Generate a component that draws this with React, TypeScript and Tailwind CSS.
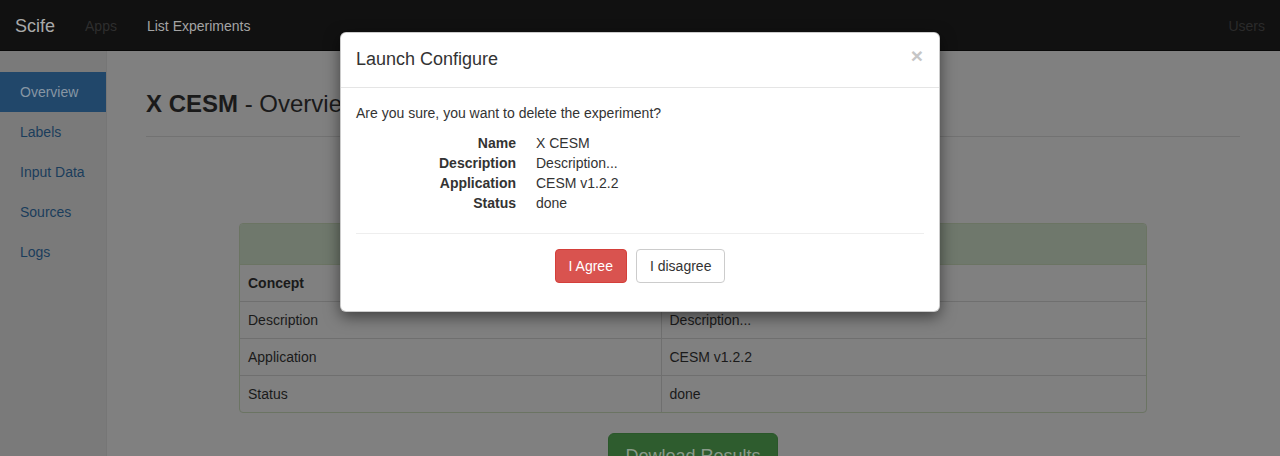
import { useState } from 'react';

type Row = { label: string; value: string };

const rows: Row[] = [
  { label: 'Description', value: 'Description...' },
  { label: 'Application', value: 'CESM v1.2.2' },
  { label: 'Status', value: 'done' },
];

const details: Row[] = [{ label: 'Name', value: 'X CESM' }, ...rows];

const sideLinks = ['Overview', 'Labels', 'Input Data', 'Sources', 'Logs'];

function Navbar() {
  return (
    <nav className="h-[51px] shrink-0 bg-[#111111] border-b border-[#080808] flex items-center pt-[2px] text-[14px]">
      <span className="px-[15px] text-[18px] text-[#a9a9a9]">Scife</span>
      <span className="px-[15px] text-[#2e2e2e]">Apps</span>
      <span className="px-[15px] text-[#a4a4a4]">List Experiments</span>
      <span className="ml-auto px-[15px] text-[#2b2b2b]">Users</span>
    </nav>
  );
}

function Sidebar({ active }: { active: string }) {
  return (
    <aside className="w-[107px] shrink-0 bg-[#7a7a7a] border-r border-[#767676] pt-[21px]">
      <ul>
        {sideLinks.map(link => (
          <li
            key={link}
            className={`h-10 flex items-center pl-5 text-[14px] ${
              link === active ? 'bg-[#21476a] text-[#8796a4]' : 'text-[#1a3d5c]'
            }`}
          >
            {link}
          </li>
        ))}
      </ul>
    </aside>
  );
}

function Overview() {
  return (
    <main className="flex-1 bg-[#808080] pl-[39px] pr-[40px] pt-[40px] text-[14px] text-[#1a1a1a]">
      <h1 className="text-[24px] leading-[26px] pb-[19px] border-b border-[#727272]">
        <b>X CESM</b> - Overview
      </h1>
      <div className="w-[908px] mx-auto mt-[86px] border border-[#6b7463] rounded-[4px] overflow-hidden">
        <div className="h-[41px] bg-[#6f786c] border-b border-[#6b7463]" />
        <table className="w-full border-collapse">
          <tbody>
            <tr>
              <td className="w-[421px] px-2 py-2 leading-5 font-bold border-r border-[#6f6f6f]">Concept</td>
              <td className="px-2 py-2 leading-5 font-bold">Value</td>
            </tr>
            {rows.map(r => (
              <tr key={r.label} className="border-t border-[#6f6f6f]">
                <td className="px-2 py-2 leading-5 border-r border-[#6f6f6f]">{r.label}</td>
                <td className="px-2 py-2 leading-5">{r.value}</td>
              </tr>
            ))}
          </tbody>
        </table>
      </div>
      <div className="flex justify-center mt-5">
        <button
          type="button"
          className="h-[46px] px-4 rounded-[6px] bg-[#2e5c2e] border border-[#2a572a] text-[18px] text-[#8a9a8a]"
        >
          Dowload Results
        </button>
      </div>
    </main>
  );
}

function ConfirmModal() {
  return (
    <div className="absolute inset-0 flex justify-center pt-[32px]">
      <div className="w-[600px] h-fit bg-white border border-black/20 rounded-[6px] shadow-[0_5px_15px_rgba(0,0,0,0.5)] text-[14px] text-[#333]">
        <div className="flex items-start px-[15px] pt-[13px] pb-[15px] border-b border-[#e5e5e5]">
          <h4 className="text-[18px] leading-[26px]">Launch Configure</h4>
          <button type="button" className="ml-auto mr-[1px] mt-[-1px] text-[21px] font-bold leading-none text-[#c6c6c6]">
            ×
          </button>
        </div>
        <div className="px-[15px] pt-[15px] pb-[28px]">
          <p className="leading-5 mb-[10px]">Are you sure, you want to delete the experiment?</p>
          <dl className="mb-5">
            {details.map(d => (
              <div key={d.label} className="flex leading-5">
                <dt className="w-40 text-right font-bold">{d.label}</dt>
                <dd className="ml-5">{d.value}</dd>
              </div>
            ))}
          </dl>
          <hr className="border-t border-[#eeeeee]" />
          <div className="flex justify-center gap-[9px] mt-[15px]">
            <button
              type="button"
              className="h-[34px] px-[13px] rounded-[4px] bg-[#d9534f] border border-[#d43f3a] text-white"
            >
              I Agree
            </button>
            <button
              type="button"
              className="h-[34px] px-[13px] rounded-[4px] bg-white border border-[#cccccc] text-[#333]"
            >
              I disagree
            </button>
          </div>
        </div>
      </div>
    </div>
  );
}

export default function App() {
  const [active] = useState('Overview');

  return (
    <div
      className="relative h-[456px] overflow-hidden flex flex-col"
      style={{ fontFamily: '"Liberation Sans", Arial, sans-serif' }}
    >
      <Navbar />
      <div className="flex flex-1">
        <Sidebar active={active} />
        <Overview />
      </div>
      <ConfirmModal />
    </div>
  );
}
